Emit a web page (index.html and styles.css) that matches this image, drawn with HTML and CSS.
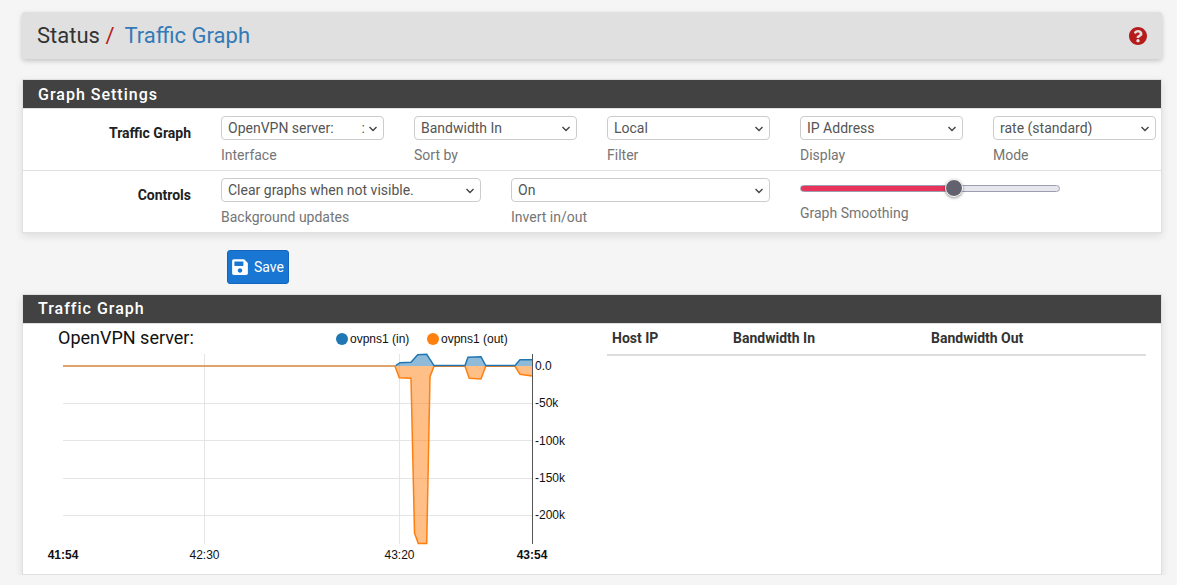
FILE: index.html
```html
<!DOCTYPE html>
<html lang="en">
<head>
  <meta charset="UTF-8" />
  <title>Status / Traffic Graph</title>
  <link rel="stylesheet" href="styles.css">
</head>
<body>
  <header class="page-title">
    <h1 class="crumbs">Status <span class="crumb-sep">/</span> <a href="#" class="crumb-link">Traffic Graph</a></h1>
    <svg class="help-icon" viewBox="8 8 496 496"><path fill="#b71c1c" d="M504 256c0 136.997-111.043 248-248 248S8 392.997 8 256C8 119.083 119.043 8 256 8s248 111.083 248 248zM262.655 90c-54.497 0-89.255 22.957-116.549 63.758-3.536 5.286-2.353 12.415 2.715 16.258l34.699 26.31c5.205 3.947 12.621 3.008 16.665-2.122 17.864-22.658 30.113-35.797 57.303-35.797 20.429 0 45.698 13.148 45.698 32.958 0 14.976-12.363 22.667-32.534 33.976C247.128 238.528 216 254.941 216 296v4c0 6.627 5.373 12 12 12h56c6.627 0 12-5.373 12-12v-1.333c0-28.462 83.186-29.647 83.186-106.667 0-58.002-60.165-102-116.531-102zM256 338c-25.365 0-46 20.635-46 46 0 25.364 20.635 46 46 46s46-20.636 46-46c0-25.365-20.635-46-46-46z"/></svg>
  </header>

  <section class="panel settings-panel">
    <h2 class="panel-heading">Graph Settings</h2>
    <div class="form-row">
      <div class="row-label">Traffic Graph</div>
      <div class="field">
        <select><option>OpenVPN server:&nbsp;&nbsp;&nbsp;&nbsp;&nbsp;&nbsp;&nbsp;&nbsp;: ovpns1</option></select>
        <span class="hint">Interface</span>
      </div>
      <div class="field">
        <select><option>Bandwidth In</option></select>
        <span class="hint">Sort by</span>
      </div>
      <div class="field">
        <select><option>Local</option></select>
        <span class="hint">Filter</span>
      </div>
      <div class="field">
        <select><option>IP Address</option></select>
        <span class="hint">Display</span>
      </div>
      <div class="field">
        <select><option>rate (standard)</option></select>
        <span class="hint">Mode</span>
      </div>
    </div>
    <div class="form-row">
      <div class="row-label">Controls</div>
      <div class="field wide">
        <select><option>Clear graphs when not visible.</option></select>
        <span class="hint">Background updates</span>
      </div>
      <div class="field wide narrow-end">
        <select><option>On</option></select>
        <span class="hint">Invert in/out</span>
      </div>
      <div class="field wide">
        <input type="range" class="smoothing" min="0" max="1" step="0.05" value="0.6">
        <span class="hint">Graph Smoothing</span>
      </div>
    </div>
  </section>

  <div class="actions">
    <button class="save-btn">
      <svg class="save-icon" viewBox="0 0 448 512"><path fill="#fff" d="M433.941 129.941l-83.882-83.882A48 48 0 0 0 316.118 32H48C21.49 32 0 53.49 0 80v352c0 26.51 21.49 48 48 48h352c26.51 0 48-21.49 48-48V163.882a48 48 0 0 0-14.059-33.941zM224 416c-35.346 0-64-28.654-64-64 0-35.346 28.654-64 64-64s64 28.654 64 64c0 35.346-28.654 64-64 64zm96-304.52V212c0 6.627-5.373 12-12 12H76c-6.627 0-12-5.373-12-12V108c0-6.627 5.373-12 12-12h228.52c3.183 0 6.235 1.264 8.485 3.515l3.48 3.48A11.996 11.996 0 0 1 320 111.48z"/></svg>
      Save
    </button>
  </div>

  <section class="panel graph-panel">
    <h2 class="panel-heading">Traffic Graph</h2>
    <div class="graph-body">
      <!-- viewBox uses page coordinates so the points read the same as the screenshot -->
      <svg class="chart" viewBox="23 324 584 250">
        <text class="chart-title" x="58" y="344">OpenVPN server:</text>

        <circle cx="342" cy="339" r="6" fill="#1f77b4"/>
        <text class="tick" x="350" y="343">ovpns1 (in)</text>
        <circle cx="433" cy="339" r="6" fill="#ff7f0e"/>
        <text class="tick" x="441" y="343">ovpns1 (out)</text>

        <g class="grid">
          <line x1="63" x2="532" y1="403.5" y2="403.5"/>
          <line x1="63" x2="532" y1="440.5" y2="440.5"/>
          <line x1="63" x2="532" y1="478.5" y2="478.5"/>
          <line x1="63" x2="532" y1="515.5" y2="515.5"/>
          <line x1="204.5" x2="204.5" y1="354" y2="544"/>
          <line x1="399.5" x2="399.5" y1="354" y2="544"/>
        </g>

        <path class="area-in" d="M395.7 366L400 362.7 411 362.3 417.7 354.7 426.7 354.3 434 366H465L468 357.3 481 356.7 485.7 366H515L520 359.7H532V366Z"/>
        <path class="area-out" d="M395 366L399.3 377.7 411 378.3 414.5 533 418.3 543.5H426.7L430 376.7 434 366H465L469.3 378.3 481 379 485.7 366H515L520 374.3 532 376V366Z"/>
        <path class="line-out" d="M395 366.3L399.3 377.7 411 378.3 414.5 533 418.3 543.5H426.7L430 376.7 434 366.3H465L469.3 378.3 481 379 485.7 366.3H515L520 374.3 532 376"/>
        <path class="line-in" d="M395.7 365.6L400 362.7 411 362.3 417.7 354.7 426.7 354.3 434 365.6H465L468 357.3 481 356.7 485.7 365.6H515L520 359.7H532"/>
        <line class="line-flat" x1="63" x2="396" y1="366" y2="366"/>

        <line class="axis" x1="532.5" x2="532.5" y1="354" y2="544"/>
        <text class="tick" x="535" y="370">0.0</text>
        <text class="tick" x="535" y="407">-50k</text>
        <text class="tick" x="535" y="445">-100k</text>
        <text class="tick" x="535" y="482">-150k</text>
        <text class="tick" x="535" y="519">-200k</text>

        <text class="tick strong mid" x="63" y="559">41:54</text>
        <text class="tick mid" x="204.5" y="559">42:30</text>
        <text class="tick mid" x="399.5" y="559">43:20</text>
        <text class="tick strong mid" x="532" y="559">43:54</text>
      </svg>

      <table class="hosts">
        <thead>
          <tr><th class="col-host">Host IP</th><th class="col-in">Bandwidth In</th><th>Bandwidth Out</th></tr>
        </thead>
      </table>
    </div>
  </section>
</body>
</html>
```

FILE: styles.css
```css
* {
  box-sizing: border-box;
}

body {
  margin: 0;
  padding: 12px 15px 0 22px;
  background: #f5f5f5;
  font-family: "Roboto", "Liberation Sans", sans-serif;
  font-size: 14px;
  color: #212121;
  overflow: hidden;
}

.page-title {
  display: flex;
  align-items: center;
  justify-content: space-between;
  height: 47px;
  width: 1140px;
  padding: 0 15px;
  background: #e0e0e0;
  border-radius: 3px;
  box-shadow: 0 2px 5px rgba(0,0,0,0.2);
}

.crumbs {
  margin: 0;
  font-size: 22px;
  font-weight: 400;
  color: #333;
}

.crumb-sep {
  color: #b71c1c;
  margin-right: 5px;
}

.crumb-link {
  color: #337ab7;
  text-decoration: none;
}

.help-icon {
  width: 18px;
  height: 18px;
  margin-top: 1px;
}

.panel {
  width: 1140px;
  background: #fff;
  border: 1px solid #e0e0e0;
  box-shadow: 0 3px 8px rgba(0,0,0,0.1);
}

.settings-panel {
  margin-top: 20px;
}

.panel-heading {
  margin: 0;
  height: 29px;
  padding-left: 15px;
  background: #424242;
  border-bottom: 1px solid #e0e0e0;
  color: #fff;
  font-size: 16px;
  font-weight: 500;
  line-height: 29px;
  letter-spacing: 1px;
}

.graph-panel .panel-heading {
  line-height: 27px;
}

.form-row {
  display: flex;
  gap: 30px;
  height: 62px;
  padding-top: 7px;
  border-bottom: 1px solid #e0e0e0;
}

.form-row:last-child {
  border-bottom: none;
  height: 61px;
}

.row-label {
  width: 168px;
  padding-top: 9px;
  text-align: right;
  font-weight: 700;
  flex: none;
}

.field {
  flex: none;
  width: 163px;
  display: flex;
  flex-direction: column;
  gap: 5px;
}

.field.wide {
  width: 260px;
}

.field.narrow-end {
  width: 259px;
}

.hint {
  color: #757575;
  line-height: 20px;
}

select {
  -webkit-appearance: none;
  appearance: none;
  width: 100%;
  height: 24px;
  padding: 0 16px 0 6px;
  background: #fff url("data:image/svg+xml,%3Csvg xmlns='http://www.w3.org/2000/svg' viewBox='0 0 10 6'%3E%3Cpath d='M1.5 1L5 4.5 8.5 1' fill='none' stroke='%23444' stroke-width='1.4'/%3E%3C/svg%3E") no-repeat right 5px top 9px / 10px 6px;
  border: 1px solid #ccc;
  border-radius: 4px;
  font-family: inherit;
  font-size: 14px;
  color: #555;
}

.smoothing {
  -webkit-appearance: none;
  appearance: none;
  display: block;
  width: 260px;
  height: 20px;
  margin: 0;
  background: transparent;
}

.smoothing::-webkit-slider-runnable-track {
  height: 7px;
  border-radius: 4px;
  border: 1px solid #a09cb0;
  background: linear-gradient(to right, #e8345a 59%, #e6e6ee 59%);
}

.smoothing::-webkit-slider-thumb {
  -webkit-appearance: none;
  width: 18px;
  height: 18px;
  margin-top: -6.5px;
  border-radius: 50%;
  border: 1px solid #fff;
  background: #62626e;
  box-shadow: 0 1px 3px rgba(0,0,0,0.45);
}

.actions {
  padding: 17px 0 10px 205px;
}

.save-btn {
  display: flex;
  align-items: center;
  gap: 6px;
  width: 62px;
  height: 34px;
  padding: 0 4px;
  background: #1976d2;
  border: 1px solid #1565c0;
  border-radius: 3px;
  color: #fff;
  font-family: inherit;
  font-size: 14px;
}

.save-icon {
  width: 16px;
  height: 18px;
  flex: none;
}

.graph-body {
  display: flex;
  height: 250px;
}

.chart {
  flex: none;
  width: 584px;
  height: 250px;
  font-family: "Liberation Sans", sans-serif;
}

.chart-title {
  font-family: "Roboto", sans-serif;
  font-size: 18px;
  fill: #111;
}

.tick {
  font-size: 12px;
  fill: #111;
}

.strong {
  font-weight: 700;
}

.mid {
  text-anchor: middle;
}

.grid line {
  stroke: #e5e5e5;
  stroke-width: 1;
}

.axis {
  stroke: #555;
  stroke-width: 1;
}

.area-in {
  fill: #1f77b4;
  fill-opacity: 0.5;
}

.area-out {
  fill: #ff7f0e;
  fill-opacity: 0.5;
}

.line-in,
.line-out {
  fill: none;
  stroke-width: 1.5;
}

.line-in {
  stroke: #1f77b4;
}

.line-out {
  stroke: #ff7f0e;
}

.line-flat {
  stroke: #d5853a;
  stroke-width: 1.5;
}

.hosts {
  width: 539px;
  height: 31px;
  border-collapse: collapse;
}

.hosts th {
  height: 31px;
  padding: 0 5px 2px;
  text-align: left;
  font-weight: 700;
  color: #333;
  border-bottom: 2px solid #ddd;
}

.col-host {
  width: 121px;
}

.col-in {
  width: 198px;
}
```
